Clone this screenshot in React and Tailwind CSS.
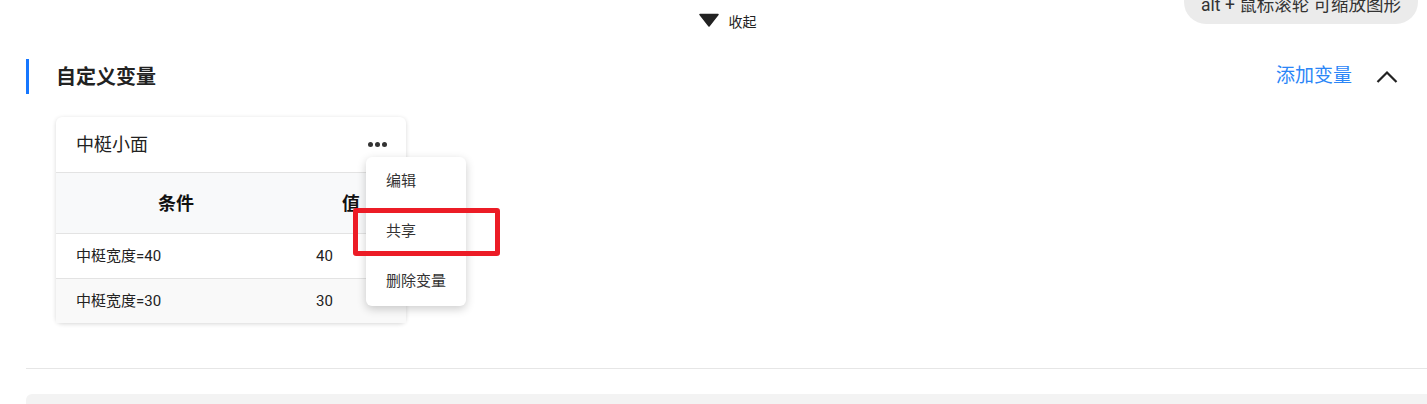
import React from 'react';

const font = { fontFamily: "Roboto, 'Noto Sans CJK SC', sans-serif" };

const rows = [
  { cond: '中梃宽度=40', value: '40', bg: 'bg-white' },
  { cond: '中梃宽度=30', value: '30', bg: 'bg-[#f9f9f9]' },
];

function VariableCard() {
  return (
    <div className="relative w-[350px] rounded-[6px] bg-white shadow-[0_1px_4px_rgba(0,0,0,0.16)]">
      <div className="flex h-[56px] items-center justify-between border-b border-[#e3e3e3] pl-[20px] pr-[19px]">
        <span className="text-[18px] text-[#222]">中梃小面</span>
        <span className="flex gap-[2px]">
          <span className="h-[5px] w-[5px] rounded-full bg-[#333]"></span>
          <span className="h-[5px] w-[5px] rounded-full bg-[#333]"></span>
          <span className="h-[5px] w-[5px] rounded-full bg-[#333]"></span>
        </span>
      </div>
      <div className="grid h-[60px] grid-cols-[240px_110px] items-center bg-[#f8f9fa] text-[18px] font-bold text-[#111]">
        <span className="text-center">条件</span>
        <span className="text-center">值</span>
      </div>
      {rows.map((r) => (
        <div key={r.cond} className={`grid h-[45px] grid-cols-[240px_110px] items-center border-t border-[#e3e3e3] text-[15px] text-[#222] ${r.bg}`}>
          <span className="pl-[20px]">{r.cond}</span>
          <span className="pl-[20px]">{r.value}</span>
        </div>
      ))}

      <div className="absolute left-[310px] top-[40px] z-10 w-[100px] rounded-[6px] bg-white shadow-[0_3px_10px_rgba(0,0,0,0.2)] text-[15px] text-[#333]">
        <div className="flex h-[49px] items-center pl-[20px]">编辑</div>
        <div className="flex h-[50px] items-center pl-[20px]">共享</div>
        <div className="flex h-[50px] items-center pl-[20px]">删除变量</div>
      </div>
      <div className="absolute left-[297px] top-[91px] z-20 h-[48px] w-[147px] rounded-[3px] border-[5px] border-[#ec1c26]"></div>
    </div>
  );
}

export default function App() {
  return (
    <div className="relative h-[404px] w-full overflow-hidden bg-white" style={font}>
      <div className="absolute right-[9px] top-[-20px] flex h-[44px] items-center rounded-full bg-[#ebebeb] px-[17px] pt-[7px] text-[17.5px] text-[#333]">
        alt + 鼠标滚轮 可缩放图形
      </div>

      <div className="flex h-[45px] items-center justify-center gap-[10px] pl-[28px]">
        <svg width="20" height="14" viewBox="0 0 20 14" className="-mt-[5px]">
          <path d="M1 1.5 H19 L10 13 Z" fill="#222" stroke="#222" strokeWidth="1.5" strokeLinejoin="round" />
        </svg>
        <span className="text-[14px] text-[#222]">收起</span>
      </div>

      <div className="pl-[26px]">
        <div className="mt-[14px] flex h-[35px] items-center justify-between pr-[29px]">
          <div className="flex h-full items-center border-l-[3px] border-[#1677ff] pl-[27px]">
            <span className="text-[20px] font-bold text-[#222]">自定义变量</span>
          </div>
          <div className="flex items-center gap-[24px]">
            <span className="text-[19px] text-[#2b86f7]">添加变量</span>
            <svg width="22" height="14" viewBox="0 0 22 14">
              <path d="M1.5 12 L11 2.5 L20.5 12" fill="none" stroke="#222" strokeWidth="2.2" />
            </svg>
          </div>
        </div>

        <div className="mt-[23px] pl-[30px]">
          <VariableCard />
        </div>

        <div className="mt-[45px] border-t border-[#e6e6e6]"></div>
        <div className="mt-[25px] h-[40px] rounded-tl-[6px] bg-[#f3f3f3]"></div>
      </div>
    </div>
  );
}
